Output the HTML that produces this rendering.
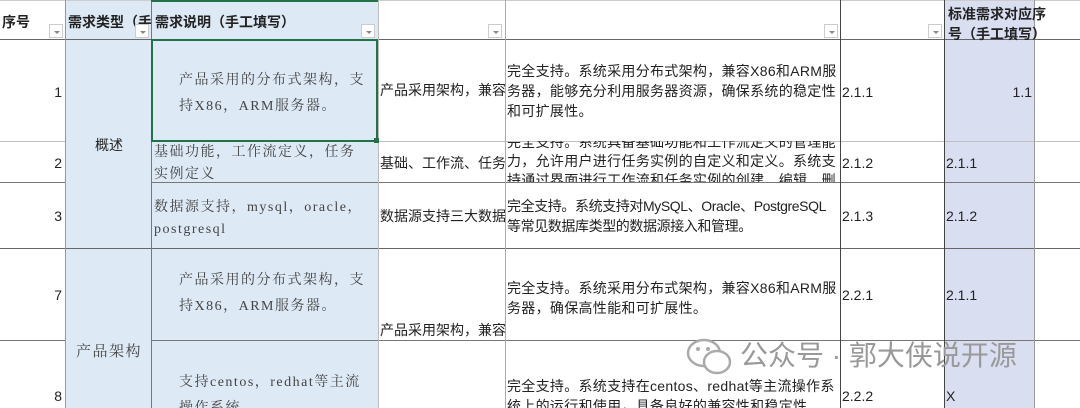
<!DOCTYPE html>
<html><head><meta charset="utf-8"><style>
html,body{margin:0;width:1080px;height:408px;overflow:hidden}
body{background:#fff;position:relative;font-family:"Liberation Sans","Noto Sans CJK SC",sans-serif;font-size:14px;color:#222}
.a{position:absolute;box-sizing:border-box}
.bg{position:absolute}
.h{position:absolute;height:1px;background:#bfbfbf}
.v{position:absolute;width:1px;background:#bfbfbf}
.t{position:absolute;line-height:20px;white-space:nowrap}
.s{font-family:"Liberation Serif","Noto Serif CJK SC",serif;color:#444;letter-spacing:1.5px}
.dd{position:absolute;width:14px;height:14px;border:1px solid #ccc;background:#fff;box-sizing:border-box}
.dd:after{content:"";position:absolute;left:4px;top:6px;border-left:3px solid transparent;border-right:3px solid transparent;border-top:3px solid #888}
.b{font-weight:bold}
</style></head><body>
<div class="bg" style="left:65px;top:0;width:86px;height:408px;background:#dde9f5"></div>
<div class="bg" style="left:151px;top:0;width:227px;height:408px;background:#dde9f5"></div>
<div class="bg" style="left:944px;top:0;width:90px;height:408px;background:#d9dff1"></div>
<div class="h" style="left:0;top:0;width:1080px;background:#ccc"></div>
<div class="h" style="left:0;top:39px;width:1080px;background:#666"></div>
<div class="h" style="left:0;top:141px;width:65px"></div><div class="h" style="left:151px;top:141px;width:929px"></div>
<div class="h" style="left:0;top:182px;width:65px;background:#777"></div><div class="h" style="left:151px;top:182px;width:929px;background:#777"></div>
<div class="h" style="left:0;top:248px;width:1080px;background:#666"></div>
<div class="h" style="left:0;top:340px;width:65px;background:#777"></div><div class="h" style="left:151px;top:340px;width:929px;background:#777"></div>
<div class="v" style="left:65px;top:0;height:408px;background:#999"></div>
<div class="v" style="left:151px;top:0;height:408px;background:#777"></div>
<div class="v" style="left:378px;top:0;height:408px;background:#bbb"></div>
<div class="v" style="left:505px;top:0;height:408px;background:#aaa"></div>
<div class="v" style="left:840px;top:0;height:408px;background:#444"></div>
<div class="v" style="left:944px;top:0;height:408px;background:#444"></div>
<div class="v" style="left:1034px;top:0;height:408px;background:#999"></div>
<div class="a" style="left:151px;top:0;width:227px;height:2px;background:#217346"></div>
<div class="a" style="left:151px;top:39px;width:227px;height:103px;border:2px solid #217346"></div>
<div class="a" style="left:374px;top:138px;width:5px;height:5px;background:#217346"></div>
<div class="t b" style="left:2px;top:12px">序号</div>
<div class="t b" style="left:68px;top:12px;width:83px;overflow:hidden">需求类型（手工</div>
<div class="t b" style="left:155px;top:12px">需求说明（手工填写）</div>
<div class="t b" style="left:948px;top:4px;line-height:20px">标准需求对应序<br>号（手工填写）</div>
<div class="dd" style="left:49px;top:24px"></div>
<div class="dd" style="left:135px;top:24px"></div>
<div class="dd" style="left:361px;top:24px"></div>
<div class="dd" style="left:488px;top:24px"></div>
<div class="dd" style="left:824px;top:24px"></div>
<div class="dd" style="left:928px;top:24px"></div>
<div class="t" style="left:48px;top:82px;width:14px;text-align:right">1</div>
<div class="t" style="left:48px;top:153px;width:14px;text-align:right">2</div>
<div class="t" style="left:48px;top:206px;width:14px;text-align:right">3</div>
<div class="t" style="left:48px;top:285px;width:14px;text-align:right">7</div>
<div class="t" style="left:48px;top:386px;width:14px;text-align:right">8</div>
<div class="t" style="left:95px;top:135px">概述</div>
<div class="t s" style="left:76px;top:342px;font-size:15px">产品架构</div>
<div class="t s" style="left:179px;top:68px;line-height:26px;font-size:14px">产品采用的分布式架构，支<br>持X86，ARM服务器。</div>
<div class="t s" style="left:154px;top:142px;line-height:22px">基础功能，工作流定义，任务<br>实例定义</div>
<div class="t s" style="left:154px;top:197px;line-height:22px">数据源支持，mysql，oracle，<br>postgresql</div>
<div class="t s" style="left:179px;top:268px;line-height:26px">产品采用的分布式架构，支<br>持X86，ARM服务器。</div>
<div class="t s" style="left:179px;top:370px;line-height:26px">支持centos，redhat等主流<br>操作系统</div>
<div class="t" style="left:380px;top:80px;width:125px;overflow:hidden">产品采用架构，兼容</div>
<div class="t" style="left:380px;top:153px;width:125px;overflow:hidden">基础、工作流、任务</div>
<div class="t" style="left:380px;top:206px;width:125px;overflow:hidden">数据源支持三大数据</div>
<div class="t" style="left:380px;top:320px;width:125px;overflow:hidden">产品采用架构，兼容</div>
<div class="a" style="left:507px;top:61px;width:330px;line-height:20px;letter-spacing:0.3px">完全支持。系统采用分布式架构，兼容X86和ARM服务器，能够充分利用服务器资源，确保系统的稳定性和可扩展性。</div>
<div class="a" style="left:507px;top:141px;width:333px;height:41px;overflow:hidden"><div style="margin-top:-8px;line-height:19px;width:330px;letter-spacing:0.3px">完全支持。系统具备基础功能和工作流定义的管理能力，允许用户进行任务实例的自定义和定义。系统支持通过界面进行工作流和任务实例的创建、编辑、删除</div></div>
<div class="a" style="left:507px;top:196px;width:333px;line-height:20px;letter-spacing:-0.4px;white-space:nowrap">完全支持。系统支持对MySQL、Oracle、PostgreSQL<br>等常见数据库类型的数据源接入和管理。</div>
<div class="a" style="left:507px;top:278px;width:330px;line-height:20px;letter-spacing:0.3px">完全支持。系统采用分布式架构，兼容X86和ARM服务器，确保高性能和可扩展性。</div>
<div class="a" style="left:507px;top:376px;width:330px;line-height:20px;letter-spacing:0.3px">完全支持。系统支持在centos、redhat等主流操作系统上的运行和使用，具备良好的兼容性和稳定性</div>
<div class="t" style="left:842px;top:82px">2.1.1</div>
<div class="t" style="left:842px;top:153px">2.1.2</div>
<div class="t" style="left:842px;top:206px">2.1.3</div>
<div class="t" style="left:842px;top:285px">2.2.1</div>
<div class="t" style="left:842px;top:386px">2.2.2</div>
<div class="t" style="left:1000px;top:82px;width:32px;text-align:right">1.1</div>
<div class="t" style="left:946px;top:153px">2.1.1</div>
<div class="t" style="left:946px;top:206px">2.1.2</div>
<div class="t" style="left:946px;top:285px">2.1.1</div>
<div class="t" style="left:946px;top:386px">X</div>
<svg class="a" style="left:686px;top:336px" width="50" height="42" viewBox="0 0 50 42"><ellipse cx="18" cy="17" rx="16" ry="13" fill="none" stroke="#aaa" stroke-width="2.5"/><ellipse cx="31" cy="26" rx="13" ry="11" fill="#fff" stroke="#aaa" stroke-width="2.5"/><circle cx="12" cy="13" r="2" fill="#aaa"/><circle cx="22" cy="13" r="2" fill="#aaa"/></svg>
<div class="t" style="left:740px;top:336px;font-size:28px;line-height:40px;color:#999">公众号 · 郭大侠说开源</div>
</body></html>
